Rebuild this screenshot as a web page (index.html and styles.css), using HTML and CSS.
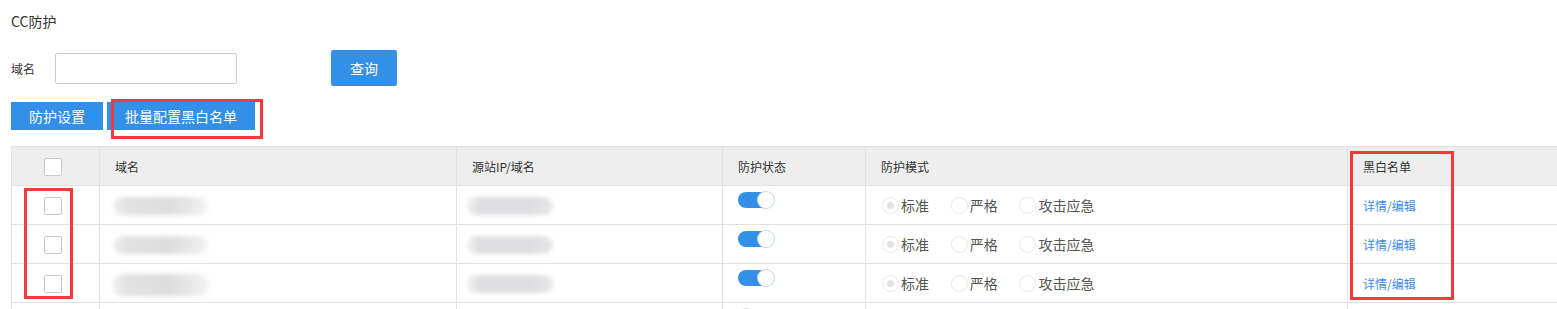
FILE: index.html
```html
<!DOCTYPE html>
<html lang="zh-CN">
<head>
  <meta charset="UTF-8" />
  <title>CC防护</title>
  <link rel="stylesheet" href="styles.css">
</head>
<body>
  <div class="page">
    <div class="page-title">CC防护</div>

    <div class="search-bar">
      <label class="search-label">域名</label>
      <input type="text" class="search-input">
      <button class="btn btn-query">查询</button>
    </div>

    <div class="toolbar">
      <button class="btn btn-small">防护设置</button>
      <div class="mark-wrap">
        <button class="btn btn-small btn-batch">批量配置黑白名单</button>
        <div class="mark mark-batch"></div>
      </div>
    </div>

    <div class="table-wrap">
      <table class="grid">
        <thead>
          <tr>
            <th class="col-check"><span class="checkbox"></span></th>
            <th class="col-domain">域名</th>
            <th class="col-origin">源站IP/域名</th>
            <th class="col-status">防护状态</th>
            <th class="col-mode">防护模式</th>
            <th class="col-list">黑白名单</th>
          </tr>
        </thead>
        <tbody>
          <tr>
            <td class="col-check"><span class="checkbox"></span></td>
            <td><span class="blur blur-domain"></span></td>
            <td><span class="blur blur-ip"></span></td>
            <td class="cell-status"><span class="switch on"></span></td>
            <td>
              <span class="radio checked"></span><span class="radio-text">标准</span>
              <span class="radio"></span><span class="radio-text">严格</span>
              <span class="radio"></span><span class="radio-text">攻击应急</span>
            </td>
            <td><a class="link">详情/编辑</a></td>
          </tr>
          <tr>
            <td class="col-check"><span class="checkbox"></span></td>
            <td><span class="blur blur-domain"></span></td>
            <td><span class="blur blur-ip"></span></td>
            <td class="cell-status"><span class="switch on"></span></td>
            <td>
              <span class="radio checked"></span><span class="radio-text">标准</span>
              <span class="radio"></span><span class="radio-text">严格</span>
              <span class="radio"></span><span class="radio-text">攻击应急</span>
            </td>
            <td><a class="link">详情/编辑</a></td>
          </tr>
          <tr>
            <td class="col-check"><span class="checkbox"></span></td>
            <td><span class="blur blur-domain tall"></span></td>
            <td><span class="blur blur-ip"></span></td>
            <td class="cell-status"><span class="switch on"></span></td>
            <td>
              <span class="radio checked"></span><span class="radio-text">标准</span>
              <span class="radio"></span><span class="radio-text">严格</span>
              <span class="radio"></span><span class="radio-text">攻击应急</span>
            </td>
            <td><a class="link">详情/编辑</a></td>
          </tr>
          <tr class="row-cut">
            <td class="col-check"></td>
            <td></td>
            <td></td>
            <td class="cell-status"><span class="switch"></span></td>
            <td></td>
            <td></td>
          </tr>
        </tbody>
      </table>
      <div class="mark mark-checks"></div>
      <div class="mark mark-list"></div>
    </div>
  </div>
</body>
</html>
```

FILE: styles.css
```css
* {
  box-sizing: border-box;
  margin: 0;
  padding: 0;
}

body {
  font-family: "Noto Sans CJK SC", "Microsoft YaHei", sans-serif;
  font-size: 12px;
  color: #333;
  background: #fff;
  overflow: hidden;
}

.page {
  padding: 11px 0 0 11px;
}

.page-title {
  font-size: 14px;
  line-height: 20px;
  height: 20px;
}

.search-bar {
  display: flex;
  align-items: center;
  margin-top: 19px;
  height: 36px;
}

.search-label {
  width: 44px;
}

.search-input {
  width: 182px;
  height: 31px;
  border: 1px solid #ccc;
  border-radius: 2px;
  outline: none;
}

.btn {
  font-family: inherit;
  background: #348fe7;
  color: #fff;
  border: none;
  cursor: pointer;
}

.btn-query {
  margin-left: 94px;
  width: 66px;
  height: 36px;
  font-size: 14px;
  border-radius: 2px;
}

.toolbar {
  display: flex;
  gap: 4px;
  margin-top: 16px;
}

.btn-small {
  height: 28px;
  width: 92px;
  font-size: 14px;
}

.btn-batch {
  width: 148px;
}

.mark-wrap {
  position: relative;
}

.mark {
  position: absolute;
  border: 3px solid #f23a3a;
  pointer-events: none;
}

.mark-batch {
  left: 4px;
  top: -3px;
  width: 152px;
  height: 40px;
}

.table-wrap {
  position: relative;
  margin-top: 16px;
}

.mark-checks {
  left: 13px;
  top: 42px;
  width: 49px;
  height: 111px;
}

.mark-list {
  left: 1339px;
  top: 5px;
  width: 104px;
  height: 149px;
}

.grid {
  width: 1580px;
  border-collapse: collapse;
  table-layout: fixed;
}

.grid th,
.grid td {
  height: 39px;
  border: 1px solid #e1e1e1;
  text-align: left;
  padding: 0 0 0 15px;
  font-weight: normal;
  vertical-align: middle;
  white-space: nowrap;
}

.grid th {
  background: #eeeeee;
  color: #333;
}

.grid td {
  color: #555;
}

.grid .col-check {
  width: 88px;
  padding: 0 0 0 32px;
}

.col-domain { width: 357px; }
.col-origin { width: 266px; }
.col-status { width: 143px; }
.col-mode { width: 482px; }

.checkbox {
  display: inline-block;
  width: 18px;
  height: 18px;
  border: 1px solid #c9c9c9;
  border-radius: 2px;
  background: #fff;
  vertical-align: middle;
}

.blur {
  display: inline-block;
  height: 18px;
  background: #dcdcdd;
  border-radius: 9px;
  filter: blur(2px);
  vertical-align: middle;
}

.blur-domain {
  width: 96px;
  margin-left: -2px;
  background: linear-gradient(to right, #f0f0f0, #e2e2e2 15%, #dddddd 60%, #ececec 88%, #f6f6f6);
}

.blur-domain.tall {
  height: 22px;
  margin-top: 4px;
}

.blur-ip {
  width: 86px;
  margin-left: -5px;
  background: linear-gradient(to right, #f0f0f0, #dedee0 15%, #dedee0 75%, #e8e8e8);
}

.grid .cell-status {
  vertical-align: top;
  padding-top: 6px;
}

.switch {
  display: inline-block;
  position: relative;
  width: 36px;
  height: 16px;
  border-radius: 8px;
  background: #dcdcdc;
}

.switch::after {
  content: "";
  position: absolute;
  top: 0;
  left: 0;
  width: 16px;
  height: 16px;
  border-radius: 50%;
  background: #fff;
  box-shadow: 0 0 0 1px #c8d6ea;
}

.switch.on {
  background: #348fe7;
}

.switch.on::after {
  left: 20px;
}

.radio {
  display: inline-block;
  width: 17px;
  height: 17px;
  border: 1px solid #e8e8e8;
  border-radius: 50%;
  background: #fff;
  vertical-align: middle;
  position: relative;
  margin-left: 1px;
}

.radio.checked::after {
  content: "";
  position: absolute;
  left: 4px;
  top: 4px;
  width: 7px;
  height: 7px;
  border-radius: 50%;
  background: #e2e2e2;
}

.radio-text {
  display: inline-block;
  font-size: 14px;
  margin: 0 18px 0 2px;
  vertical-align: middle;
}

.link {
  color: #3b8ce8;
  cursor: pointer;
}
```
